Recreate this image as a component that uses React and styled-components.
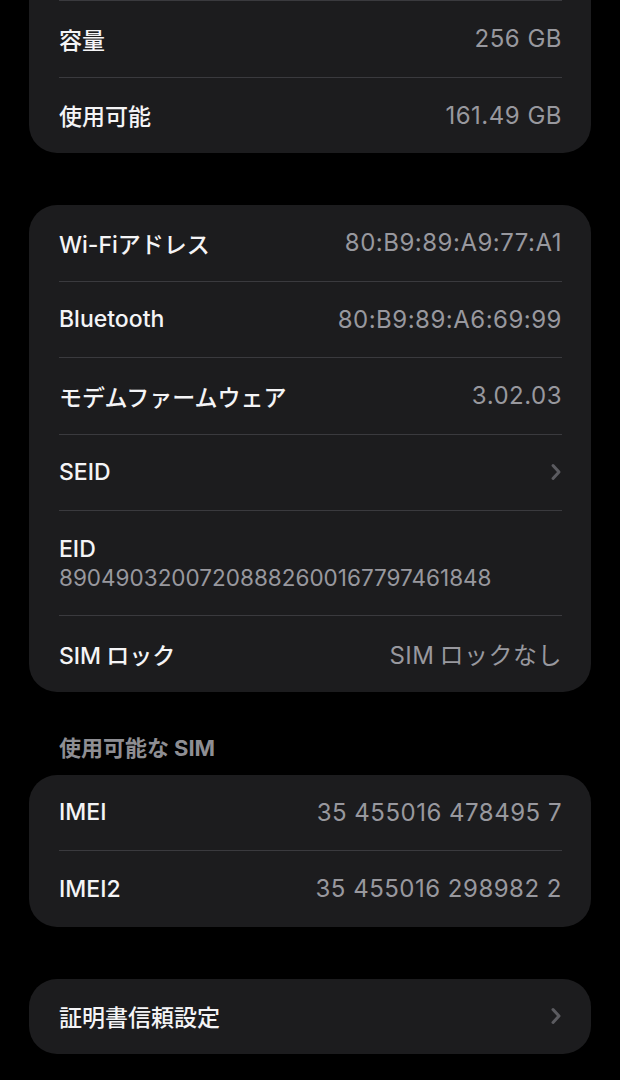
import React from 'react';
import styled, { createGlobalStyle } from 'styled-components';

const GlobalStyle = createGlobalStyle`
  html, body {
    margin : 0;
    padding : 0;
    background : #000;
  }
  body {
    font-family : "Inter", "Noto Sans CJK JP", sans-serif;
    -webkit-font-smoothing : antialiased;
  }
`

function Chevron () {
    return (
        <svg width="12" height="18" viewBox="0 0 12 18" fill="none">
            <path d="M3 2.5 L9 9 L3 15.5" stroke="#5b5b60" strokeWidth="3" strokeLinecap="round" strokeLinejoin="round" />
        </svg>
    )
}

function InfoRow ({ label, value, chevron }) {
    return (
        <Row>
            <Label>{label}</Label>
            {value && <Value>{value}</Value>}
            {chevron && <Chevron />}
        </Row>
    )
}

function App () {

    return (
        <>
        <GlobalStyle />
        <Page>
            <Card $clipped>
                <Divider />
                <InfoRow label="容量" value="256 GB" />
                <Divider />
                <InfoRow label="使用可能" value="161.49 GB" />
            </Card>

            <Card>
                <InfoRow label="Wi-Fiアドレス" value="80:B9:89:A9:77:A1" />
                <Divider />
                <InfoRow label="Bluetooth" value="80:B9:89:A6:69:99" />
                <Divider />
                <InfoRow label="モデムファームウェア" value="3.02.03" />
                <Divider />
                <InfoRow label="SEID" chevron />
                <Divider />
                <StackRow>
                    <Label>EID</Label>
                    <SubValue>89049032007208882600167797461848</SubValue>
                </StackRow>
                <Divider />
                <InfoRow
                    label={<><Latin>SIM</Latin>ロック</>}
                    value={<><Latin>SIM</Latin>ロックなし</>}
                />
            </Card>

            <SectionHeader>使用可能な<Latin $before>SIM</Latin></SectionHeader>
            <Card>
                <InfoRow label="IMEI" value="35 455016 478495 7" />
                <Divider />
                <InfoRow label="IMEI2" value="35 455016 298982 2" />
            </Card>

            <Card $spaced>
                <InfoRow label="証明書信頼設定" chevron />
            </Card>
        </Page>
        </>
    )

}

const Page = styled.div`
  display : flex;
  flex-direction : column;
  padding : 0 29px 40px;
  min-height : 1080px;
  box-sizing : border-box;
  background : #000;
`
const Card = styled.div`
  display : flex;
  flex-direction : column;
  background : #1c1c1e;
  border-radius : ${p => p.$clipped ? '0 0 28px 28px' : '28px'};
  padding : 0 29px 0 30px;
  margin-bottom : ${p => p.$clipped ? '52px' : '0'};
  margin-top : ${p => p.$spaced ? '52px' : '0'};
`
const Row = styled.div`
  display : flex;
  flex-direction : row;
  align-items : center;
  justify-content : space-between;
  height : 75.5px;
`
const StackRow = styled.div`
  display : flex;
  flex-direction : column;
  justify-content : center;
  gap : 1px;
  height : 104px;
`
const Label = styled.div`
  color : #f4f4f6;
  font-size : 23px;
  font-weight : 500;
`
const Value = styled.div`
  color : #98989e;
  font-size : 24px;
  font-weight : 400;
  letter-spacing : 0.5px;
`
const SubValue = styled(Value)`
  font-size : 22.5px;
  letter-spacing : 0;
`
const Latin = styled.span`
  margin-right : ${p => p.$before ? '0' : '5px'};
  margin-left : ${p => p.$before ? '5px' : '0'};
`
const Divider = styled.div`
  height : 1px;
  background : #3a3a3e;
`
const SectionHeader = styled.div`
  color : #8e8e93;
  font-size : 22px;
  font-weight : 700;
  padding : 44px 0 14px 30px;
  line-height : 25px;
`

export default App;
